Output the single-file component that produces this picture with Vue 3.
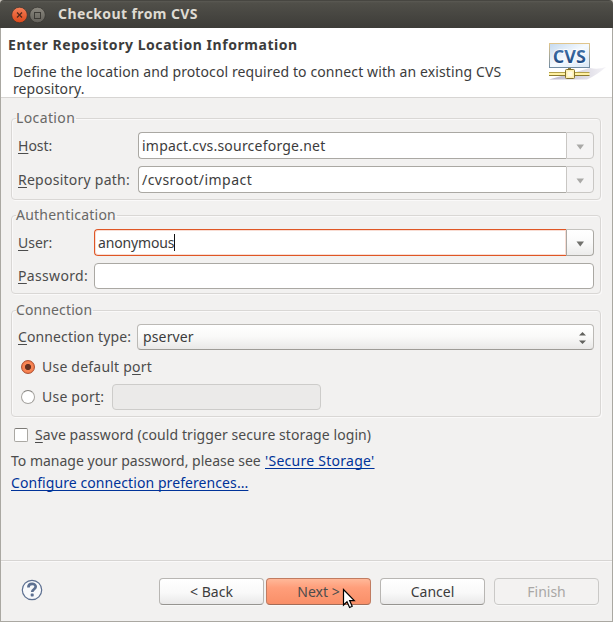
<script setup>
import { ref } from 'vue'

const host = ref('impact.cvs.sourceforge.net')
const path = ref('/cvsroot/impact')
const user = ref('anonymous')
const port = ref('default')
</script>

<template>
  <div class="window">
    <header class="titlebar">
      <svg class="controls" width="38" height="18" viewBox="0 0 38 18">
        <defs>
          <linearGradient id="close" x1="0" y1="0" x2="0" y2="1">
            <stop offset="0" stop-color="#f58059" /><stop offset="1" stop-color="#dc4719" />
          </linearGradient>
          <linearGradient id="max" x1="0" y1="0" x2="0" y2="1">
            <stop offset="0" stop-color="#8b887f" /><stop offset="1" stop-color="#62605a" />
          </linearGradient>
        </defs>
        <circle cx="9.5" cy="9" r="7.8" fill="url(#close)" stroke="#34322e" stroke-width=".7" />
        <path d="M7 6.5l5 5M12 6.5l-5 5" stroke="#53291b" stroke-width="1.3" />
        <circle cx="27.5" cy="9" r="7.8" fill="url(#max)" stroke="#34322e" stroke-width=".7" />
        <rect x="24.5" y="6.5" width="6" height="6" fill="none" stroke="#3c3a35" />
      </svg>
      <h1 class="title">Checkout from CVS</h1>
    </header>

    <main class="dialog">
      <section class="banner">
        <div class="banner-text">
          <h2>Enter Repository Location Information</h2>
          <p>Define the location and protocol required to connect with an existing CVS<br>repository.</p>
        </div>
        <svg class="logo" width="60" height="42" viewBox="0 0 60 42">
          <defs>
            <linearGradient id="screen" x1="0" y1="0" x2="1" y2="1">
              <stop offset="0" stop-color="#c4d9ee" /><stop offset=".5" stop-color="#f5faff" /><stop offset="1" stop-color="#d9e7f5" />
            </linearGradient>
            <linearGradient id="frame" x1="0" y1="0" x2="0" y2="1">
              <stop offset="0" stop-color="#e0c58c" /><stop offset="1" stop-color="#718ba2" />
            </linearGradient>
            <linearGradient id="letters" x1="0" y1="0" x2="0" y2="1">
              <stop offset="0" stop-color="#4d82b8" /><stop offset="1" stop-color="#173f78" />
            </linearGradient>
            <linearGradient id="shade" x1="0" y1="0" x2="1" y2="0">
              <stop offset="0" stop-color="#b9b5c8" /><stop offset="1" stop-color="#f4f3f7" />
            </linearGradient>
          </defs>
          <path d="M1 37.5L42 26Q50 28 58 25Q49 33 39 37.5Z" fill="url(#shade)" />
          <rect x="1.5" y="1.5" width="40" height="24" fill="url(#screen)" stroke="url(#frame)" />
          <text x="4.8" y="20.5" textLength="33" lengthAdjust="spacingAndGlyphs" class="logo-text">CVS</text>
          <rect x="20" y="26" width="3" height="3" fill="#91803c" />
          <path d="M1 30.5H41.500" stroke="#b3a04a" />
          <path d="M1 32H41.500" stroke="#fff1a2" stroke-width="2" />
          <path d="M1 33.5H41.500" stroke="#8c7a2f" />
          <rect x="17.500" y="27.5" width="9" height="9" rx="1" fill="#fff0b0" stroke="#83702b" />
          <rect x="19.500" y="29.5" width="5" height="5" fill="#fff9e2" />
        </svg>
      </section>

      <div class="content">
        <fieldset class="group location">
          <legend class="t-loc">Location</legend>
          <div class="row tall">
            <label><u>H</u>ost:</label>
            <div class="combo muted">
              <div class="entry"><span class="v-host">{{ host }}</span></div>
              <div class="drop"><svg width="9" height="6" viewBox="0 0 9 6"><path d="M.5 .5H8L4.25 5.5Z" /></svg></div>
            </div>
          </div>
          <div class="row tall">
            <label class="t-path"><u>R</u>epository path:</label>
            <div class="combo muted">
              <div class="entry"><span class="v-path">{{ path }}</span></div>
              <div class="drop"><svg width="9" height="6" viewBox="0 0 9 6"><path d="M.5 .5H8L4.25 5.5Z" /></svg></div>
            </div>
          </div>
        </fieldset>

        <fieldset class="group auth">
          <legend class="t-auth">Authentication</legend>
          <div class="row tall">
            <label><u>U</u>ser:</label>
            <div class="combo focus">
              <div class="entry"><span class="v-user">{{ user }}</span><i class="caret"></i></div>
              <div class="drop"><svg width="9" height="6" viewBox="0 0 9 6"><path d="M.5 .5H8L4.25 5.5Z" /></svg></div>
            </div>
          </div>
          <div class="row">
            <label class="t-pass"><u>P</u>assword:</label>
            <div class="field"></div>
          </div>
        </fieldset>

        <fieldset class="group conn">
          <legend class="t-conn">Connection</legend>
          <div class="row">
            <label class="t-type"><u>C</u>onnection type:</label>
            <div class="select">
              <span class="v-type">pserver</span>
              <svg width="7" height="12" viewBox="0 0 7 12"><path d="M0 3.5L3.5 0L7 3.500ZM0 8.500L3.5 12L7 8.500Z" fill="#62625e" /></svg>
            </div>
          </div>
          <div class="option" @click="port = 'default'">
            <span class="radio" :class="{ on: port === 'default' }"></span>
            <span class="t-def">Use default p<u>o</u>rt</span>
          </div>
          <div class="option" @click="port = 'custom'">
            <span class="radio" :class="{ on: port === 'custom' }"></span>
            <span class="t-port">Use por<u>t</u>:</span>
            <div class="field disabled"></div>
          </div>
        </fieldset>

        <div class="save"><span class="check"></span><span class="t-save"><u>S</u>ave password (could trigger secure storage login)</span></div>
        <p class="line"><span class="t-manage">To manage your password, please see</span><a class="t-secure">'Secure Storage'</a></p>
        <p class="line"><a class="t-config">Configure connection preferences...</a></p>
      </div>

      <footer class="footer">
        <svg class="help" width="22" height="22" viewBox="0 0 22 22">
          <circle cx="11" cy="11" r="9.7" fill="#f8f9fb" stroke="#5d7091" stroke-width="1.2" />
          <path d="M7.4 8.4C7.4 3.6 14.7 3.8 14.7 7.8C14.7 10.3 11.2 10.2 11.2 13" fill="none" stroke="#5d7091" stroke-width="2.7" />
          <rect x="9.7" y="14.6" width="3" height="3" rx=".8" fill="#5d7091" />
        </svg>
        <div class="btn back"><span>&lt; Back</span></div>
        <div class="btn next">
          <span>Next &gt;</span>
          <svg class="cursor" width="15" height="22" viewBox="0 0 15 22">
            <path d="M1.5 1.5V17L5 13.7L7.6 19.5L10.2 18.3L7.6 12.6H12.3Z" fill="#fff" stroke="#000" stroke-width="1.2" />
          </svg>
        </div>
        <div class="btn cancel"><span>Cancel</span></div>
        <div class="btn finish"><span>Finish</span></div>
      </footer>
    </main>
  </div>
</template>

<style>
body { background: #c9c4bc; }
</style>

<style scoped>
* { box-sizing: border-box; margin: 0; }
.window { width: 613px; height: 622px; display: flex; flex-direction: column; font: 14px/20px "Noto Sans", "Open Sans", sans-serif; color: #4c4c4c; white-space: nowrap; }
.titlebar { height: 28px; flex: none; display: flex; align-items: center; padding-left: 10px; border-radius: 4px 4px 0 0; background: linear-gradient(#33322e 0, #5b5a54 1px, #504f49 3px, #3d3c38 100%); }
.controls { flex: none; margin-top: 1px; }
.title { margin-left: 10px; font-size: 14px; line-height: 20px; color: #dfdbd2; letter-spacing: .4px; }
.dialog { flex: 1; display: flex; flex-direction: column; background: #f2f1f0; border: 1px solid #aaa8a2; border-top: 0; }
.banner { height: 70px; flex: none; display: flex; background: #fff; border-bottom: 1px solid #d7d5d3; color: #3c3c3c; }
.banner-text { width: 540px; padding: 7px 0 0 7px; }
h2 { font-size: 14px; line-height: 20px; letter-spacing: .55px; }
.banner p { padding: 8px 0 0 5px; line-height: 17px; letter-spacing: .11px; }
.logo { margin: 14px 0 0 7px; }
.logo-text { font: bold 17.5px "Open Sans", sans-serif; fill: url(#letters); stroke: #fff; stroke-width: 1.5px; paint-order: stroke; }
.content { flex: 1; padding: 11px 11px 0 10px; }
.group { display: flex; flex-direction: column; min-width: 0; border: 1px solid #d9d7d5; border-radius: 4px; box-shadow: inset 1px 1px #faf9f9, 1px 1px #faf9f9; padding: 0 6px; }
legend { height: 18px; line-height: 18px; padding: 0 1px 0 0; margin-left: -2px; color: #696866; }
.location { height: 91px; }
.auth { height: 88px; margin-top: 6px; }
.conn { height: 116px; margin-top: 7px; }
.row { display: flex; height: 26px; align-items: center; flex: none; }
.row.tall { height: 27px; }
.location .row, .auth .row { margin-top: 7px; }
.location legend + .row, .auth legend + .row, .conn legend + .row { margin-top: 5px; }
label { flex: none; }
.location label { width: 120px; }
.auth label { width: 76px; }
.conn label { width: 119px; }
u { text-decoration: underline 1px; text-underline-offset: 2px; text-decoration-skip-ink: none; }
.t-loc { letter-spacing: .38px; }
.t-auth { letter-spacing: .22px; }
.t-conn { letter-spacing: .12px; }
.t-path { letter-spacing: .25px; }
.t-pass { letter-spacing: .33px; }
.t-type { letter-spacing: .12px; }
.t-def, .t-port { letter-spacing: .22px; }
.t-save, .t-config { letter-spacing: .08px; }
.t-secure { letter-spacing: .27px; }
.v-host { letter-spacing: .22px; }
.v-path { letter-spacing: .45px; }
.v-user { letter-spacing: -.15px; }
.v-type { letter-spacing: .14px; }
.combo { flex: 1; height: 27px; display: flex; color: #3c3c3c; }
.entry { flex: 1; display: flex; align-items: center; padding-left: 3px; background: #fff; border: 1px solid #aaa8a3; border-right: 0; border-radius: 4px 0 0 4px; }
.focus .entry { border-color: #df5625; box-shadow: inset 0 0 0 1px #f8ddd4; }
.caret { width: 1px; height: 17px; background: #111; }
.drop { width: 28px; display: flex; align-items: center; justify-content: center; border: 1px solid #aaa8a3; border-radius: 0 4px 4px 0; background: linear-gradient(#fff, #fafafa 50%, #ececeb); fill: #71716d; }
.focus .drop { border-top-color: #c4c2be; }
.muted .drop { border-color: #c9c7c4; background: #f5f4f4; fill: #aaa9a7; }
.drop svg { margin-top: 2px; }
.field { flex: 1; height: 26px; background: #fff; border: 1px solid #aaa8a3; border-radius: 4px; }
.select { flex: 1; height: 26px; display: flex; align-items: center; justify-content: space-between; padding: 0 7px 0 5px; color: #3c3c3c; border: 1px solid #bbb9b5; border-bottom-color: #9d9b96; border-radius: 4px; background: linear-gradient(#fff, #f9f9f8 50%, #e9e8e7); }
.select svg { margin-top: 2px; }
.option { display: flex; flex: none; align-items: center; height: 26px; margin-top: 4px; padding-left: 3px; }
.radio { flex: none; width: 14px; height: 14px; margin-right: 7px; border-radius: 50%; border: 1px solid #a5a39f; border-top-color: #83817d; background: #fff; }
.radio.on { border-color: #ad5233; background: radial-gradient(circle, #643020 0 2.7px, #f78453 3.5px 5px, #ed7244 6px); }
.option .field { flex: none; width: 209px; background: #ebeae9; border-color: #cdccca; }
.t-port { width: 70px; }
.save { display: flex; align-items: center; height: 26px; margin-top: 5px; padding-left: 3px; }
.check { width: 14px; height: 14px; margin-right: 7px; background: #fff; border: 1px solid #aaa8a3; border-top-color: #7c7a76; border-radius: 2px; }
.line { display: flex; height: 22px; line-height: 22px; }
.save + .line { margin-top: 2px; }
a { color: #003399; text-decoration: underline 1px; text-underline-offset: 2px; text-decoration-skip-ink: none; }
.t-manage { width: 254px; }
.footer { height: 61px; flex: none; display: flex; border-top: 1px solid #d7d5d3; box-shadow: inset 0 1px #faf9f9; padding: 17px 0 0 20px; }
.help { margin-top: 1px; }
.btn { position: relative; width: 105px; height: 27px; display: flex; align-items: center; justify-content: center; color: #3c3c3c; border: 1px solid #b8b6b3; border-bottom-color: #969490; border-radius: 4px; background: linear-gradient(#fff, #f9f9f9 55%, #e9e8e8); box-shadow: 0 1px #f8f8f7; }
.back { margin-left: 116px; }
.next { margin-left: 2px; color: #4c4c4c; border-color: #c17c61; border-bottom-color: #a36c57; background: linear-gradient(#ffb899, #ff9e7a 35%, #f98f68); }
.cancel { margin-left: 9px; }
.finish { margin-left: 9px; color: #a9a7a5; border-color: #cac9c7; background: #f3f2f1; }
.cursor { position: absolute; left: 75px; top: 9px; }
</style>
